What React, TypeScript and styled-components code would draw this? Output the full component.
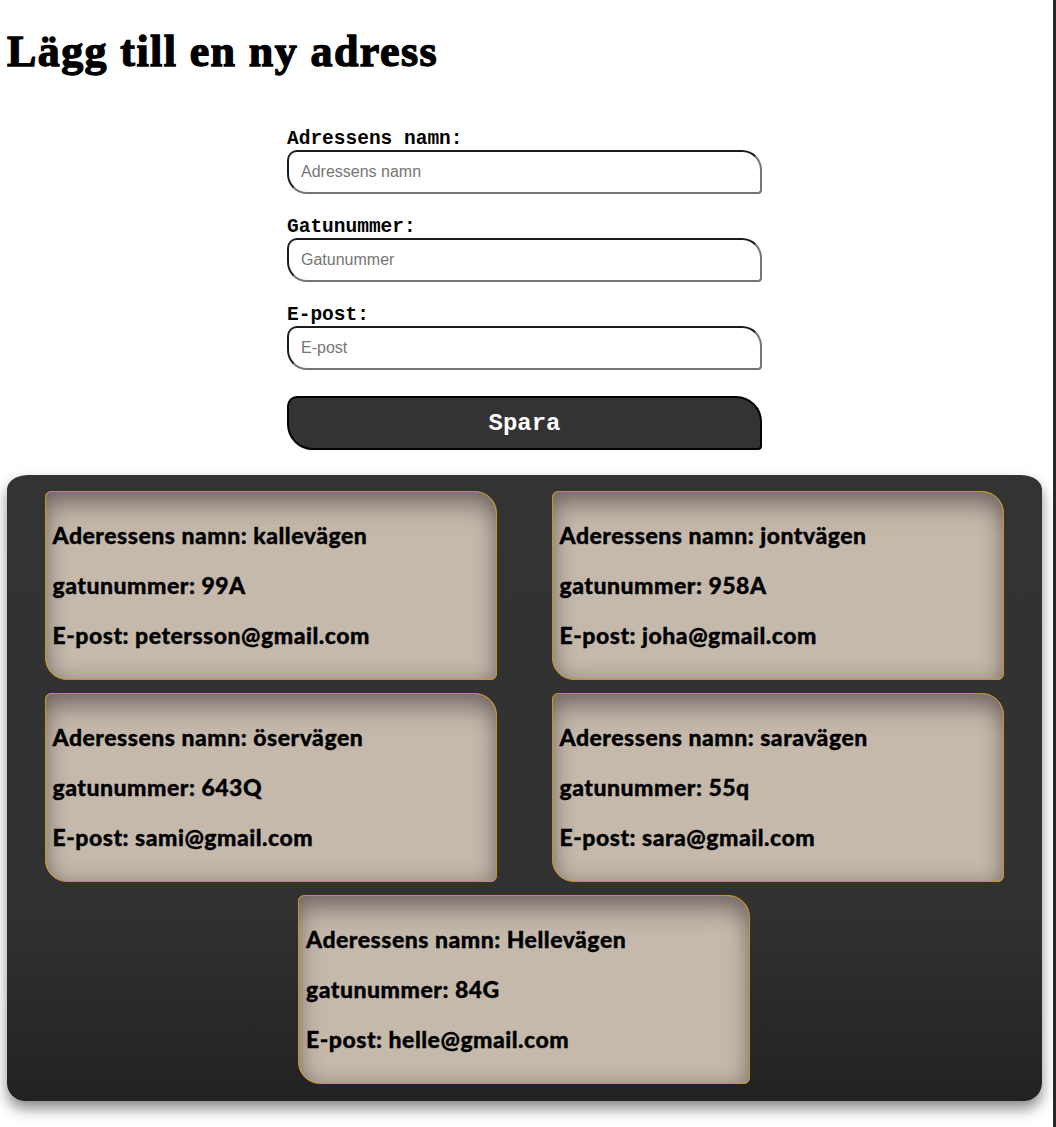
import styled, { createGlobalStyle } from "styled-components";

const GlobalStyle = createGlobalStyle`
  html {
    background: linear-gradient(to right, #ffffff calc(100% - 3px), #26282c calc(100% - 3px));
  }
  body {
    margin: 0;
    padding: 0 14px 26px 7px;
    font-family: "Liberation Sans", Arial, sans-serif;
  }
`;

const addresses = [
  { name: "kallevägen", number: "99A", email: "petersson@gmail.com" },
  { name: "jontvägen", number: "958A", email: "joha@gmail.com" },
  { name: "öservägen", number: "643Q", email: "sami@gmail.com" },
  { name: "saravägen", number: "55q", email: "sara@gmail.com" },
  { name: "Hellevägen", number: "84G", email: "helle@gmail.com" },
];

export default function App() {
  return (
    <>
      <GlobalStyle />
      <Title>Lägg till en ny adress</Title>
      <Form onSubmit={(e) => e.preventDefault()}>
        <Label htmlFor="namn">Adressens namn:</Label>
        <Input id="namn" placeholder="Adressens namn" />
        <Label htmlFor="gata">Gatunummer:</Label>
        <Input id="gata" placeholder="Gatunummer" />
        <Label htmlFor="epost">E-post:</Label>
        <Input id="epost" placeholder="E-post" />
        <SaveButton type="submit">Spara</SaveButton>
      </Form>
      <AddressList>
        {addresses.map((a) => (
          <AddressCard key={a.email}>
            <CardLine>Aderessens namn: {a.name}</CardLine>
            <CardLine>gatunummer: {a.number}</CardLine>
            <CardLine>E-post: {a.email}</CardLine>
          </AddressCard>
        ))}
      </AddressList>
    </>
  );
}

const Title = styled.h1`
  margin: 26px 0 0;
  font-family: "Liberation Serif", "Times New Roman", serif;
  font-weight: 900;
  font-size: 44px;
  line-height: 52px;
  letter-spacing: 1.4px;
  color: #000;
  -webkit-text-stroke: 1.3px #000;
`;

const Form = styled.form`
  width: 475px;
  margin: 50px auto 0;
  display: flex;
  flex-direction: column;
`;

const Label = styled.label`
  display: block;
  font-family: "Liberation Mono", "Courier New", monospace;
  font-weight: bold;
  font-size: 19.5px;
  line-height: 22px;
  color: #000;
  margin-top: 22px;

  &:first-child {
    margin-top: 0;
  }
`;

const Input = styled.input`
  box-sizing: border-box;
  height: 44px;
  width: 100%;
  padding: 0 12px;
  border: 2px solid;
  border-color: #1c1c1c #767676 #767676 #1c1c1c;
  border-radius: 10px 20px 4px 20px;
  background: #fff;
  font-family: "Liberation Sans", Arial, sans-serif;
  font-size: 16px;
  color: #000;
  outline: none;

  &::placeholder {
    color: #757575;
  }
`;

const SaveButton = styled.button`
  margin-top: 26px;
  height: 54px;
  width: 100%;
  border: 2px solid #000;
  border-radius: 10px 26px 4px 26px;
  background: #333333;
  color: #fff;
  font-family: "Liberation Mono", "Courier New", monospace;
  font-weight: bold;
  font-size: 24px;
  cursor: pointer;
`;

const AddressList = styled.section`
  margin-top: 25px;
  display: flex;
  flex-wrap: wrap;
  justify-content: center;
  column-gap: 55px;
  row-gap: 13px;
  padding: 16px 38px 17px 37px;
  border-radius: 22px / 14px;
  border-bottom-left-radius: 18px;
  border-bottom-right-radius: 18px;
  background: linear-gradient(to bottom, #333333 0%, #313131 70%, #222222 100%);
  box-shadow: 0 8px 14px rgba(0, 0, 0, 0.45);
`;

const AddressCard = styled.article`
  box-sizing: border-box;
  width: 452px;
  height: 189px;
  padding: 7px 7px 7px;
  border: 1px solid #c9961c;
  border-radius: 6px 22px 6px 22px;
  background: #c5b9ac;
  box-shadow: inset 0 18px 26px -6px rgba(70, 60, 60, 0.55),
    inset 0 0 20px rgba(60, 50, 45, 0.35);
`;

const CardLine = styled.p`
  margin: 22px 0;
  font-family: Lato, "Open Sans", sans-serif;
  font-weight: 900;
  font-size: 23px;
  line-height: 28px;
  letter-spacing: 0.5px;
  color: #000;
  -webkit-text-stroke: 0.35px #000;
`;
